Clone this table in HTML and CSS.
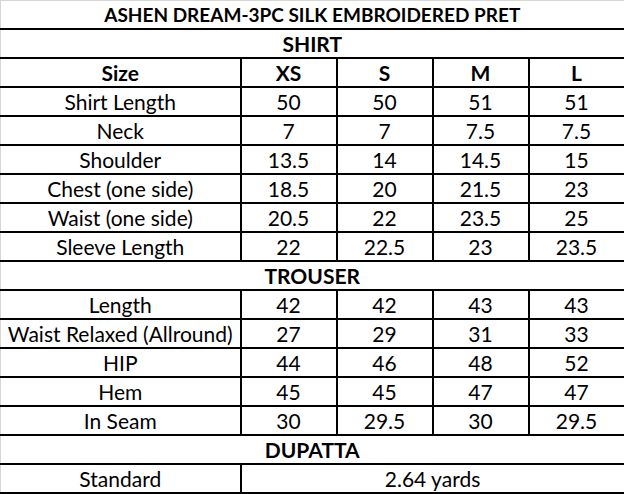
FILE: index.html
```html
<!DOCTYPE html>
<html>
<head>
<meta charset="utf-8">
<link rel="stylesheet" href="styles.css">
</head>
<body>
<table class="chart">
  <colgroup>
    <col class="c-label"><col class="c-size"><col class="c-size"><col class="c-size"><col class="c-last">
  </colgroup>
  <tr class="title"><td colspan="5">ASHEN DREAM-3PC SILK EMBROIDERED PRET</td></tr>
  <tr class="section"><td colspan="5">SHIRT</td></tr>
  <tr class="head"><td>Size</td><td>XS</td><td>S</td><td>M</td><td>L</td></tr>
  <tr><td>Shirt Length</td><td>50</td><td>50</td><td>51</td><td>51</td></tr>
  <tr><td>Neck</td><td>7</td><td>7</td><td>7.5</td><td>7.5</td></tr>
  <tr><td>Shoulder</td><td>13.5</td><td>14</td><td>14.5</td><td>15</td></tr>
  <tr><td>Chest (one side)</td><td>18.5</td><td>20</td><td>21.5</td><td>23</td></tr>
  <tr><td>Waist (one side)</td><td>20.5</td><td>22</td><td>23.5</td><td>25</td></tr>
  <tr><td>Sleeve Length</td><td>22</td><td>22.5</td><td>23</td><td>23.5</td></tr>
  <tr class="section"><td colspan="5">TROUSER</td></tr>
  <tr><td>Length</td><td>42</td><td>42</td><td>43</td><td>43</td></tr>
  <tr><td>Waist Relaxed (Allround)</td><td>27</td><td>29</td><td>31</td><td>33</td></tr>
  <tr><td>HIP</td><td>44</td><td>46</td><td>48</td><td>52</td></tr>
  <tr><td>Hem</td><td>45</td><td>45</td><td>47</td><td>47</td></tr>
  <tr><td>In Seam</td><td>30</td><td>29.5</td><td>30</td><td>29.5</td></tr>
  <tr class="section"><td colspan="5">DUPATTA</td></tr>
  <tr><td>Standard</td><td colspan="4">2.64 yards</td></tr>
</table>
</body>
</html>
```
FILE: styles.css
```css
html, body {
  margin: 0;
  padding: 0;
  background: #ffffff;
}
.chart {
  border-collapse: collapse;
  table-layout: fixed;
  width: 624px;
  font-family: Lato, "Liberation Sans", sans-serif;
  font-size: 21px;
  color: #000;
}
.c-label { width: 240px; }
.c-size { width: 96px; }
.c-last { width: 96px; }
.chart td {
  height: 27px;
  padding: 0;
  text-align: center;
  vertical-align: middle;
  border: 2px solid #000;
  line-height: 27px;
  white-space: nowrap;
}
.chart tr:first-child td {
  border-top: 1px solid #d6d6d6;
}
.chart td:first-child {
  border-left: 1px solid #d6d6d6;
}
.title td {
  font-weight: bold;
  font-size: 19px;
}
.section td, .head td {
  font-weight: bold;
}
```
